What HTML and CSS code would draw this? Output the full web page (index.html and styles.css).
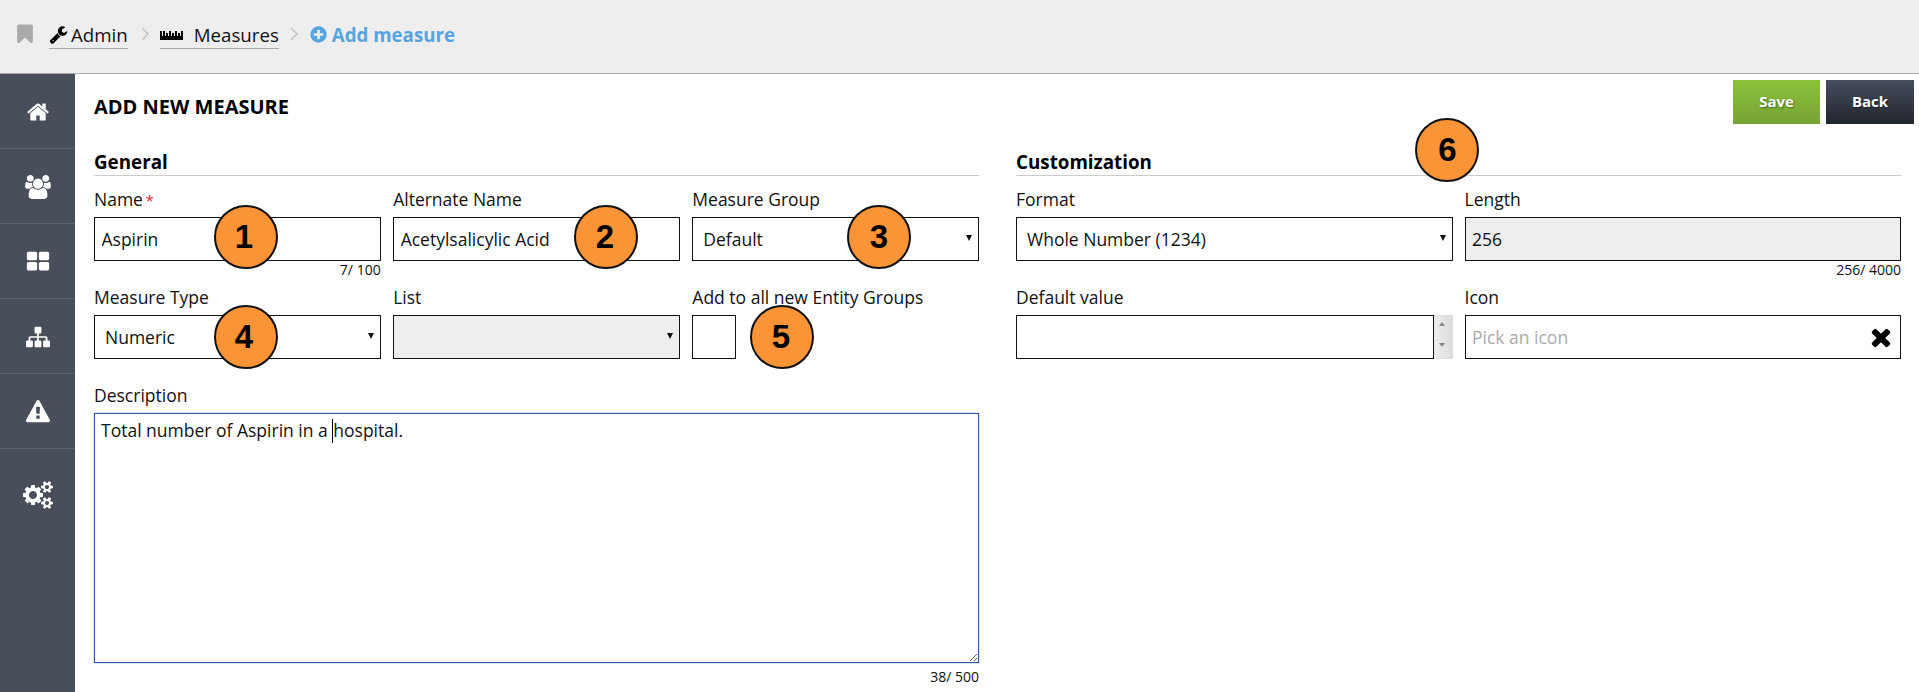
FILE: index.html
```html
<!DOCTYPE html>
<html lang="en">
<head>
<meta charset="utf-8">
<title>Add measure</title>
<link rel="stylesheet" href="styles.css">
</head>
<body>
<header class="topbar">
  <svg class="ico ico-bookmark" viewBox="0 0 1792 1792"><path d="M1420 128q23 0 44 9 33 13 52.5 41t19.5 62v1289q0 34-19.5 62t-52.5 41q-19 8-44 8-48 0-83-32l-441-424-441 424q-36 33-83 33-23 0-44-9-33-13-52.5-41t-19.5-62v-1289q0-34 19.5-62t52.5-41q21-9 44-9h1048z"/></svg>
  <a class="crumb">
    <svg class="ico ico-wrench" viewBox="0 0 1792 1792"><path d="M448 1472q0-26-19-45t-45-19-45 19-19 45 19 45 45 19 45-19 19-45zm644-420l-682 682q-37 37-90 37-52 0-91-37l-106-108q-38-36-38-90 0-53 38-91l681-681q39 98 114.5 173.5t173.5 114.5zm634-435q0 39-23 106-47 134-164.5 217.5t-258.5 83.5q-185 0-316.5-131.5t-131.5-316.5 131.5-316.5 316.5-131.5q58 0 121.5 16.5t107.5 46.5q16 11 16 28t-16 28l-293 169v224l193 107q5-3 79-48.5t135.5-81 70.5-35.5q15 0 23.5 10t8.5 25z"/></svg>
    Admin
  </a>
  <svg class="chev" viewBox="0 0 8 14"><path d="M1 1l6 6-6 6"/></svg>
  <a class="crumb crumb-wide">
    <svg class="ruler" viewBox="0 0 27 9"><path d="M0 0h2v5h1V0h2v5h1V2h2v3h1V0h2v5h1V2h2v3h1V0h2v5h1V2h2v3h1V0h2v9H0z"/></svg>
    Measures
  </a>
  <svg class="chev chev-second" viewBox="0 0 8 14"><path d="M1 1l6 6-6 6"/></svg>
  <span class="current">
    <svg class="ico ico-plus" viewBox="0 0 1792 1792"><path d="M1344 960v-128q0-26-19-45t-45-19h-256v-256q0-26-19-45t-45-19h-128q-26 0-45 19t-19 45v256h-256q-26 0-45 19t-19 45v128q0 26 19 45t45 19h256v256q0 26 19 45t45 19h128q26 0 45-19t19-45v-256h256q26 0 45-19t19-45zm320-64q0 209-103 385.5t-279.5 279.5-385.5 103-385.5-103-279.5-279.5-103-385.5 103-385.5 279.5-279.5 385.5-103 385.5 103 279.5 279.5 103 385.5z"/></svg>
    Add measure
  </span>
</header>

<div class="layout">
  <nav class="sidebar">
    <a class="nav-item"><svg class="nav-ico" viewBox="0 0 1792 1792"><path d="M1472 992v480q0 26-19 45t-45 19h-384v-384h-256v384h-384q-26 0-45-19t-19-45v-480q0-1 .5-3t.5-3l575-474 575 474q1 2 1 6zm223-69l-62 74q-8 9-21 11h-3q-13 0-21-7l-692-577-692 577q-12 8-24 7-13-2-21-11l-62-74q-8-10-7-23.5t11-21.5l719-599q32-26 76-26t76 26l244 204v-195q0-14 9-23t23-9h192q14 0 23 9t9 23v408l219 182q10 8 11 21.5t-7 23.5z"/></svg></a>
    <a class="nav-item"><svg class="nav-ico nav-ico-wide" viewBox="0 0 1920 1792"><path d="M593 896q-162 5-265 128h-134q-82 0-138-40.5t-56-118.5q0-353 124-353 6 0 43.5 21t97.5 42.5 119 21.5q67 0 133-23-5 37-5 66 0 139 81 256zm1071 637q0 120-73 189.5t-194 69.5h-874q-121 0-194-69.5t-73-189.5q0-53 3.5-103.5t14-109 26.5-108.5 43-97.5 62-81 85.5-53.5 111.5-20q10 0 43 21.5t73 48 107 48 135 21.5 135-21.5 107-48 73-48 43-21.5q61 0 111.5 20t85.5 53.5 62 81 43 97.5 26.5 108.5 14 109 3.5 103.5zm-1024-1277q0 106-75 181t-181 75-181-75-75-181 75-181 181-75 181 75 75 181zm704 384q0 159-112.5 271.5t-271.5 112.5-271.5-112.5-112.5-271.5 112.5-271.5 271.5-112.5 271.5 112.5 112.5 271.5zm576 225q0 78-56 118.5t-138 40.5h-134q-103-123-265-128 81-117 81-256 0-29-5-66 66 23 133 23 59 0 119-21.5t97.5-42.5 43.5-21q124 0 124 353zm-128-609q0 106-75 181t-181 75-181-75-75-181 75-181 181-75 181 75 75 181z"/></svg></a>
    <a class="nav-item"><svg class="nav-ico" viewBox="0 0 1792 1792"><path d="M832 1024v384q0 52-38 90t-90 38h-512q-52 0-90-38t-38-90v-384q0-52 38-90t90-38h512q52 0 90 38t38 90zm0-768v384q0 52-38 90t-90 38h-512q-52 0-90-38t-38-90v-384q0-52 38-90t90-38h512q52 0 90 38t38 90zm896 768v384q0 52-38 90t-90 38h-512q-52 0-90-38t-38-90v-384q0-52 38-90t90-38h512q52 0 90 38t38 90zm0-768v384q0 52-38 90t-90 38h-512q-52 0-90-38t-38-90v-384q0-52 38-90t90-38h512q52 0 90 38t38 90z"/></svg></a>
    <a class="nav-item"><svg class="nav-ico" viewBox="0 0 1792 1792"><path d="M1792 1248v320q0 40-28 68t-68 28h-320q-40 0-68-28t-28-68v-320q0-40 28-68t68-28h96v-192h-512v192h96q40 0 68 28t28 68v320q0 40-28 68t-68 28h-320q-40 0-68-28t-28-68v-320q0-40 28-68t68-28h96v-192h-512v192h96q40 0 68 28t28 68v320q0 40-28 68t-68 28h-320q-40 0-68-28t-28-68v-320q0-40 28-68t68-28h96v-192q0-52 38-90t90-38h512v-192h-96q-40 0-68-28t-28-68v-320q0-40 28-68t68-28h320q40 0 68 28t28 68v320q0 40-28 68t-68 28h-96v192h512q52 0 90 38t38 90v192h96q40 0 68 28t28 68z"/></svg></a>
    <a class="nav-item"><svg class="nav-ico" viewBox="0 0 1792 1792"><path d="M1024 1375v-190q0-14-9.5-23.5t-22.5-9.5h-192q-13 0-22.5 9.5t-9.5 23.5v190q0 14 9.5 23.5t22.5 9.5h192q13 0 22.5-9.5t9.5-23.5zm-2-374l18-459q0-12-10-19-13-11-24-11h-220q-11 0-24 11-10 7-10 21l17 457q0 10 10 16.5t24 6.5h185q14 0 23.5-6.5t10.5-16.5zm-14-934l768 1408q35 63-2 126-17 29-46.5 46t-63.5 17h-1536q-34 0-63.5-17t-46.5-46q-37-63-2-126l768-1408q17-31 47-49t65-18 65 18 47 49z"/></svg></a>
    <a class="nav-item nav-item-last"><svg class="nav-ico nav-ico-cogs" viewBox="0 0 1920 1792"><path d="M896 896q0-106-75-181t-181-75-181 75-75 181 75 181 181 75 181-75 75-181zm768 512q0-52-38-90t-90-38-90 38-38 90q0 53 37.5 90.5t90.5 37.5 90.5-37.5 37.5-90.5zm0-1024q0-52-38-90t-90-38-90 38-38 90q0 53 37.5 90.5t90.5 37.5 90.5-37.5 37.5-90.5zm-384 421v185q0 10-7 19.5t-16 10.5l-155 24q-11 35-32 76 34 48 90 115 7 11 7 20 0 12-7 19-23 30-82.5 89.5t-78.5 59.5q-11 0-21-7l-115-90q-37 19-77 31-11 108-23 155-7 24-30 24h-186q-11 0-20-7.5t-10-17.5l-23-153q-34-10-75-31l-118 89q-7 7-20 7-11 0-21-8-144-133-144-160 0-9 7-19 10-14 41-53t47-61q-23-44-35-82l-152-24q-10-1-17-9.5t-7-19.5v-185q0-10 7-19.5t16-10.5l155-24q11-35 32-76-34-48-90-115-7-11-7-20 0-12 7-20 22-30 82-89t79-59q11 0 21 7l115 90q34-18 77-32 11-108 23-154 7-24 30-24h186q11 0 20 7.5t10 17.5l23 153q34 10 75 31l118-89q8-7 20-7 11 0 21 8 144 133 144 160 0 8-7 19-12 16-42 54t-45 60q23 48 34 82l152 23q10 2 17 10.5t7 19.5zm640 533v140q0 16-149 31-12 27-30 52 51 113 51 138 0 4-4 7-122 71-124 71-8 0-46-47t-52-68q-20 2-30 2t-30-2q-14 21-52 68t-46 47q-2 0-124-71-4-3-4-7 0-25 51-138-18-25-30-52-149-15-149-31v-140q0-16 149-31 13-29 30-52-51-113-51-138 0-4 4-7 4-2 35-20t59-34 30-16q8 0 46 46.5t52 67.5q20-2 30-2t30 2q51-71 92-112l6-2q4 0 124 70 4 3 4 7 0 25-51 138 17 23 30 52 149 15 149 31zm0-1024v140q0 16-149 31-12 27-30 52 51 113 51 138 0 4-4 7-122 71-124 71-8 0-46-47t-52-68q-20 2-30 2t-30-2q-14 21-52 68t-46 47q-2 0-124-71-4-3-4-7 0-25 51-138-18-25-30-52-149-15-149-31v-140q0-16 149-31 13-29 30-52-51-113-51-138 0-4 4-7 4-2 35-20t59-34 30-16q8 0 46 46.5t52 67.5q20-2 30-2t30 2q51-71 92-112l6-2q4 0 124 70 4 3 4 7 0 25-51 138 17 23 30 52 149 15 149 31z"/></svg></a>
  </nav>

  <main class="main">
    <div class="pagehead">
      <h1 class="title">ADD NEW MEASURE</h1>
      <div class="actions">
        <button class="btn btn-save">Save</button>
        <button class="btn btn-back">Back</button>
      </div>
    </div>

    <div class="columns">
      <section>
        <h2 class="section-title">General</h2>
        <div class="grid grid-3">
          <div class="field">
            <label class="label">Name <span class="req">*</span></label>
            <input class="control" value="Aspirin">
            <div class="count">7/ 100</div>
          </div>
          <div class="field">
            <label class="label">Alternate Name</label>
            <input class="control" value="Acetylsalicylic Acid">
            <div class="count"></div>
          </div>
          <div class="field">
            <label class="label">Measure Group</label>
            <div class="select-wrap"><select class="control select"><option>Default</option></select></div>
            <div class="count"></div>
          </div>
          <div class="field">
            <label class="label">Measure Type</label>
            <div class="select-wrap"><select class="control select"><option>Numeric</option></select></div>
            <div class="count"></div>
          </div>
          <div class="field">
            <label class="label">List</label>
            <div class="select-wrap"><select class="control select disabled" disabled><option></option></select></div>
            <div class="count"></div>
          </div>
          <div class="field">
            <label class="label">Add to all new Entity Groups</label>
            <div class="checkbox"></div>
            <div class="count"></div>
          </div>
          <div class="field field-full">
            <label class="label">Description</label>
            <div class="textarea">Total number of Aspirin in a <span class="caret"></span>hospital.</div>
            <div class="count">38/ 500</div>
          </div>
        </div>
      </section>

      <section>
        <h2 class="section-title">Customization</h2>
        <div class="grid grid-2">
          <div class="field">
            <label class="label">Format</label>
            <div class="select-wrap"><select class="control select"><option>Whole Number (1234)</option></select></div>
            <div class="count"></div>
          </div>
          <div class="field">
            <label class="label">Length</label>
            <input class="control disabled" value="256" disabled>
            <div class="count">256/ 4000</div>
          </div>
          <div class="field">
            <label class="label">Default value</label>
            <div class="number-wrap">
              <input class="control number-input">
              <div class="spinner"><span class="spin-up"></span><span class="spin-down"></span></div>
            </div>
            <div class="count"></div>
          </div>
          <div class="field">
            <label class="label">Icon</label>
            <div class="icon-wrap">
              <input class="control" placeholder="Pick an icon">
              <svg class="ico-clear" viewBox="0 0 1792 1792"><path d="M1490 1322q0 40-28 68l-136 136q-28 28-68 28t-68-28l-294-294-294 294q-28 28-68 28t-68-28l-136-136q-28-28-28-68t28-68l294-294-294-294q-28-28-28-68t28-68l136-136q28-28 68-28t68 28l294 294 294-294q28-28 68-28t68 28l136 136q28 28 28 68t-28 68l-294 294 294 294q28 28 28 68z"/></svg>
            </div>
            <div class="count"></div>
          </div>
        </div>
      </section>
    </div>
  </main>
</div>

<div class="callout c1">1</div>
<div class="callout c2">2</div>
<div class="callout c3">3</div>
<div class="callout c4">4</div>
<div class="callout c5">5</div>
<div class="callout c6">6</div>
</body>
</html>
```
FILE: styles.css
```css
* { box-sizing: border-box; }
html, body { height: 100%; }
body {
  margin: 0;
  position: relative;
  overflow: hidden;
  background: #fff;
  color: #111;
  font-family: "Open Sans", "Liberation Sans", sans-serif;
  font-size: 17.5px;
}

/* top bar */
.topbar {
  height: 74px;
  display: flex;
  align-items: center;
  padding: 0 0 5px 17px;
  background: #eee;
  border-bottom: 1px solid #aaa;
}
.ico { fill: currentColor; flex: none; }
.ico-bookmark { width: 22px; height: 22px; margin-left: -3px; color: #aaa; margin-right: 13px; }
.crumb {
  display: flex;
  align-items: center;
  height: 27px;
  border-bottom: 1px solid #aaa;
  margin-top: 2px;
  font-size: 18.7px;
  color: #111;
  white-space: nowrap;
}
.ico-wrench { width: 19px; height: 19px; margin-right: 3px; color: #000; }
.ruler { width: 27px; height: 9px; margin-right: 7px; margin-top: 1px; fill: #000; flex: none; }
.chev { width: 8px; height: 14px; margin: 0 11px 0 13px; fill: none; stroke: #c4c4c4; stroke-width: 1.6; flex: none; }
.chev-second { margin: 0 11px; }
.current {
  display: flex;
  align-items: center;
  font-size: 18.7px;
  font-weight: 700;
  color: #55a4de;
  white-space: nowrap;
}
.ico-plus { width: 19px; height: 19px; margin-right: 4px; }

/* layout */
.layout { display: flex; height: 618px; }
.sidebar { width: 75px; flex: none; background: #484f5b; }
.nav-item {
  display: flex;
  justify-content: center;
  align-items: center;
  height: 75px;
  padding-top: 2px;
  border-bottom: 1px solid #5a616c;
  color: #fff;
}
.nav-item-last { border-bottom: 0; height: 90px; }
.nav-ico { width: 24px; height: 24px; fill: #fff; }
.nav-ico-wide { width: 26px; height: 24px; }
.nav-ico-cogs { width: 30px; height: 28px; }

.main { flex: 1; min-width: 0; padding: 6px 18px 0 19px; }
.pagehead { display: flex; justify-content: space-between; margin-right: -13px; height: 44px; }
.title { margin: 0; padding-top: 14px; font-size: 20px; line-height: 26px; font-weight: 700; color: #000; }
.actions { display: flex; gap: 6px; }
.btn {
  height: 44px;
  border: 0;
  padding: 0 0 2px;
  color: #fff;
  font: 700 15px "Open Sans", "Liberation Sans", sans-serif;
  text-shadow: 1px 1px 2px rgba(0, 0, 0, .45);
}
.btn-save { width: 87px; background: linear-gradient(#8bc13a, #76a336); }
.btn-back { width: 88px; background: linear-gradient(#474e5c, #21252c); }

.columns { display: grid; grid-template-columns: 885px 885px; column-gap: 37px; margin-top: 26px; }
.section-title {
  margin: 0 0 13px;
  height: 26px;
  font-size: 18.8px;
  line-height: 25px;
  font-weight: 700;
  color: #000;
  border-bottom: 1px solid #ccc;
}
.grid { display: grid; row-gap: 10px; }
.grid-3 { grid-template-columns: repeat(3, 1fr); column-gap: 12.5px; }
.grid-2 { grid-template-columns: repeat(2, 1fr); column-gap: 12px; }
.field { min-width: 0; }
.field-full { grid-column: 1 / -1; }
.field-full .count { margin-top: 5px; }
.label { display: block; height: 22px; margin-bottom: 6px; line-height: 21px; font-size: 17.5px; color: #111; white-space: nowrap; }
.req { color: #e8213a; font-size: 15px; margin-left: -2px; }
.count { height: 16px; line-height: 18px; font-size: 14px; text-align: right; color: #111; }

.control {
  display: block;
  width: 100%;
  height: 44px;
  margin: 0;
  padding: 0 6.5px;
  background: #fff;
  border: 1px solid #111;
  border-radius: 0;
  outline: 0;
  color: #111;
  font: 17.5px "Open Sans", "Liberation Sans", sans-serif;
}
.control::placeholder { color: #aaa; opacity: 1; }
.disabled { background: #eee; opacity: 1; }
.select { appearance: none; padding: 0 20px 0 10px; }
.select-wrap, .icon-wrap, .number-wrap { position: relative; }
.select-wrap::after {
  content: "";
  position: absolute;
  right: 7px;
  top: 18px;
  border-style: solid;
  border-width: 6px 3px 0;
  border-color: #111 transparent transparent;
}
.checkbox { width: 44px; height: 44px; border: 1px solid #111; background: #fff; }
.number-wrap { display: flex; }
.number-input { flex: 1; min-width: 0; }
.spinner {
  position: relative;
  width: 19px;
  height: 44px;
  flex: none;
  background: linear-gradient(90deg, #eee, #ddd);
  border: 1px solid #ddd;
  border-left: 0;
}
.spin-up, .spin-down {
  position: absolute;
  left: 5px;
  border-style: solid;
  border-color: transparent;
}
.spin-up { top: 6px; border-width: 0 3px 4px; border-bottom-color: #888; }
.spin-down { bottom: 11px; border-width: 4px 3px 0; border-top-color: #888; }
.ico-clear { position: absolute; right: 6px; top: 8px; width: 28px; height: 28px; fill: #000; }

.textarea {
  height: 250px;
  padding: 3px 6px;
  border: 1px solid #2a5ca8;
  box-shadow: 0 0 1px #2a5ca8;
  line-height: 26px;
  color: #111;
  resize: vertical;
  overflow: auto;
}
.caret { display: inline-block; width: 0; height: 24px; border-left: 1px solid #000; vertical-align: -6px; }

/* numbered annotations laid over the screenshot */
.callout {
  position: absolute;
  width: 64px;
  height: 64px;
  display: flex;
  align-items: center;
  justify-content: center;
  background: #fb9436;
  border: 2px solid #111;
  border-radius: 50%;
  color: #000;
  font: 700 33px "Liberation Sans", sans-serif;
}
.c1 { left: 214px; top: 205px; padding-right: 4px; }
.c2 { left: 574px; top: 205px; padding-right: 2px; }
.c3 { left: 847px; top: 205px; }
.c4 { left: 214px; top: 305px; padding-right: 4px; }
.c5 { left: 750px; top: 305px; padding-right: 2px; }
.c6 { left: 1415px; top: 118px; padding-left: 1px; }
```
